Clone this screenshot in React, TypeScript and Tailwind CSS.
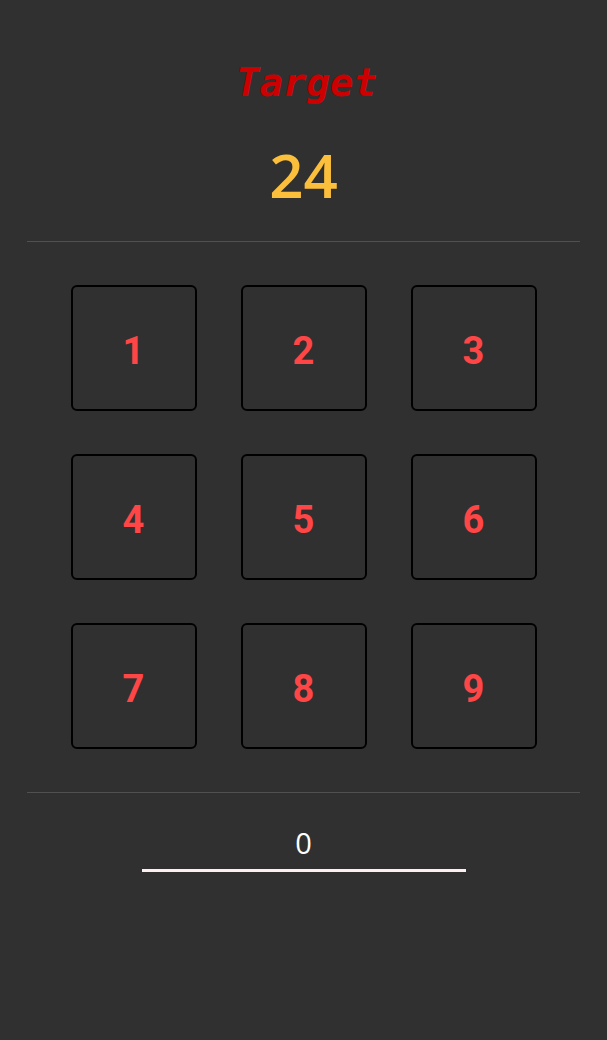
export default function App() {
  const nums = [1, 2, 3, 4, 5, 6, 7, 8, 9]

  return (
    <div className="min-h-[1040px] w-full bg-[#303030] flex flex-col items-center">
      <h1 className="mt-[57px] h-[52px] pl-[6px] text-[39px] leading-[52px] italic font-bold text-[#cc0000] font-['DejaVu_Sans_Mono',monospace]">
        Target
      </h1>
      <div className="mt-[38px] h-[56px] text-[60px] leading-[56px] font-semibold text-[#fbbf3b] font-['Open_Sans',sans-serif]">
        24
      </div>
      <div className="mt-[38px] w-[553px] h-px bg-[#505050]" />

      <div className="mt-[43px] grid grid-cols-3 gap-x-[44px] gap-y-[43px]">
        {nums.map((n) => (
          <button
            key={n}
            className="w-[126px] h-[126px] pt-[6px] rounded-[6px] border-2 border-black flex items-center justify-center text-[38px] font-bold text-[#ff4646] font-['Roboto',sans-serif]"
          >
            {n}
          </button>
        ))}
      </div>

      <div className="mt-[43px] w-[553px] h-px bg-[#505050]" />

      <div className="mt-[30px] w-[324px] flex flex-col items-center">
        <div className="h-[40px] text-[29px] leading-[40px] text-white font-['Open_Sans',sans-serif]">0</div>
        <div className="mt-[6px] w-full h-[3px] bg-[#fdeef0]" />
      </div>
    </div>
  )
}
